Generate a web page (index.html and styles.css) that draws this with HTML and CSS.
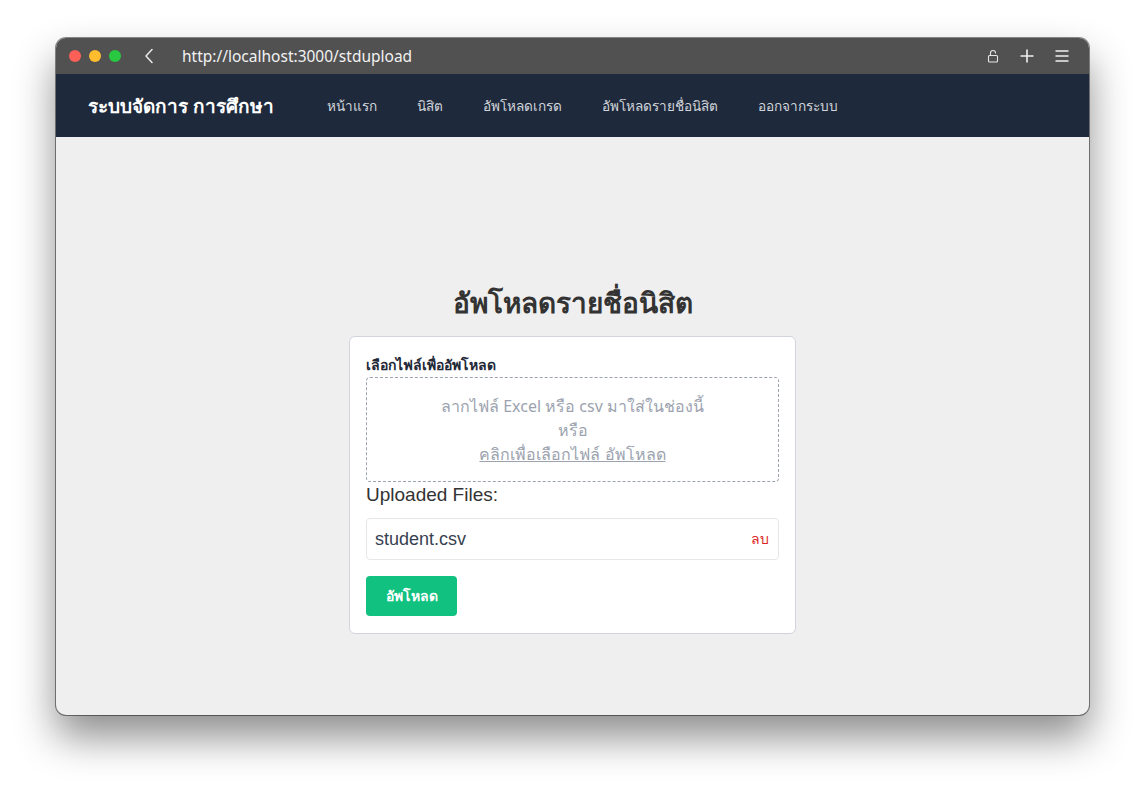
FILE: index.html
```html
<!DOCTYPE html>
<html lang="th">
<head>
<meta charset="utf-8">
<title>stdupload</title>
<link rel="stylesheet" href="styles.css">
</head>
<body>
<div class="window">
  <div class="titlebar">
    <div class="lights">
      <span class="light red"></span>
      <span class="light yellow"></span>
      <span class="light green"></span>
    </div>
    <svg class="back" width="10" height="16" viewBox="0 0 10 16"><path d="M8 1.5 L2 8 L8 14.5" fill="none" stroke="#e5e5e5" stroke-width="1.6" stroke-linecap="round" stroke-linejoin="round"/></svg>
    <div class="url">http://localhost:3000/stdupload</div>
    <div class="tools">
      <svg width="12" height="14" viewBox="0 0 12 14"><rect x="1.5" y="6.5" width="9" height="6.5" rx="1" fill="none" stroke="#e5e5e5" stroke-width="1.1"/><path d="M3.5 6.5 V4 a2.5 2.5 0 0 1 5 0 V4.5" fill="none" stroke="#e5e5e5" stroke-width="1.1"/></svg>
      <svg width="14" height="14" viewBox="0 0 14 14"><path d="M7 0.5 V13.5 M0.5 7 H13.5" stroke="#f0f0f0" stroke-width="1.6"/></svg>
      <svg width="14" height="12" viewBox="0 0 14 12"><path d="M0.5 1 H13.5 M0.5 6 H13.5 M0.5 11 H13.5" stroke="#f0f0f0" stroke-width="1.6"/></svg>
    </div>
  </div>
  <nav class="navbar">
    <div class="brand">ระบบจัดการ การศึกษา</div>
    <ul class="menu">
      <li>หน้าแรก</li>
      <li>นิสิต</li>
      <li>อัพโหลดเกรด</li>
      <li>อัพโหลดรายชื่อนิสิต</li>
      <li>ออกจากระบบ</li>
    </ul>
  </nav>
  <main class="content">
    <h1 class="title">อัพโหลดรายชื่อนิสิต</h1>
    <div class="card">
      <div class="label">เลือกไฟล์เพื่ออัพโหลด</div>
      <div class="dropzone">
        <div>ลากไฟล์ Excel หรือ csv มาใส่ในช่องนี้</div>
        <div>หรือ</div>
        <div class="pick">คลิกเพื่อเลือกไฟล์ อัพโหลด</div>
      </div>
      <div class="uploaded">Uploaded Files:</div>
      <div class="filerow">
        <span class="fname">student.csv</span>
        <span class="del">ลบ</span>
      </div>
      <button class="btn">อัพโหลด</button>
    </div>
  </main>
</div>
</body>
</html>
```

FILE: styles.css
```css
* { box-sizing: border-box; }
html, body { margin: 0; padding: 0; }
body {
  background: #ffffff;
  font-family: "Noto Sans", "Liberation Sans", sans-serif;
  width: 1145px;
  height: 789px;
  overflow: hidden;
  padding: 38px 0 0 56px;
}
.window {
  width: 1033px;
  height: 677px;
  border-radius: 10px;
  overflow: hidden;
  background: #efefef;
  box-shadow: 0 0 0 1px rgba(0,0,0,0.45), 0 22px 40px rgba(0,0,0,0.45);
  display: flex;
  flex-direction: column;
}
.titlebar {
  height: 36px;
  background: #515151;
  display: flex;
  align-items: center;
  padding: 0 20px 0 13px;
}
.lights { display: flex; gap: 8px; }
.light { width: 12px; height: 12px; border-radius: 50%; display: block; }
.red { background: #fe5f57; }
.yellow { background: #febc2e; }
.green { background: #28c840; }
.back { margin-left: 23px; }
.url {
  margin-left: 28px;
  color: #f2f2f2;
  font-size: 15.5px;
  font-family: "Noto Sans", "Liberation Sans", sans-serif;
  flex: 1;
}
.tools { display: flex; align-items: center; gap: 21px; }
.navbar {
  height: 63px;
  background: #1e293b;
  display: flex;
  align-items: center;
  padding: 0 32px;
}
.brand {
  color: #ffffff;
  font-weight: 700;
  font-size: 19px;
  width: 239px;
}
.menu {
  list-style: none;
  margin: 0;
  padding: 0;
  display: flex;
  gap: 40px;
}
.menu li {
  color: #d1d5db;
  font-size: 13.6px;
}
.content {
  flex: 1;
  display: flex;
  flex-direction: column;
  align-items: center;
  padding-top: 144px;
}
.title {
  margin: 0 0 13px;
  font-size: 28px;
  font-weight: 700;
  color: #333333;
  line-height: 42px;
}
.card {
  width: 447px;
  background: #ffffff;
  border: 1px solid #d1d5db;
  border-radius: 6px;
  padding: 16px 16px 17px 16px;
}
.label {
  font-size: 14px;
  font-weight: 700;
  color: #1f2937;
  line-height: 24px;
}
.dropzone {
  border: 1px dashed #9ca3af;
  border-radius: 4px;
  height: 105px;
  display: flex;
  flex-direction: column;
  align-items: center;
  justify-content: center;
  color: #9ca3af;
  font-size: 16px;
  line-height: 24px;
}
.pick { text-decoration: underline; }
.uploaded {
  font-family: "Liberation Sans", Arial, sans-serif;
  font-size: 19px;
  color: #333333;
  margin-top: 0;
  line-height: 26px;
}
.filerow {
  margin-top: 10px;
  height: 42px;
  border: 1px solid #e5e7eb;
  border-radius: 4px;
  display: flex;
  align-items: center;
  justify-content: space-between;
  padding: 0 9px 0 8px;
}
.fname {
  font-family: "Liberation Sans", Arial, sans-serif;
  font-size: 18px;
  color: #374151;
}
.del { color: #dc2626; font-size: 14px; }
.btn {
  margin-top: 16px;
  height: 40px;
  width: 91px;
  border: none;
  border-radius: 4px;
  background: #10c17f;
  color: #ffffff;
  font-family: "Noto Sans", sans-serif;
  font-weight: 700;
  font-size: 14px;
  display: block;
}
```
